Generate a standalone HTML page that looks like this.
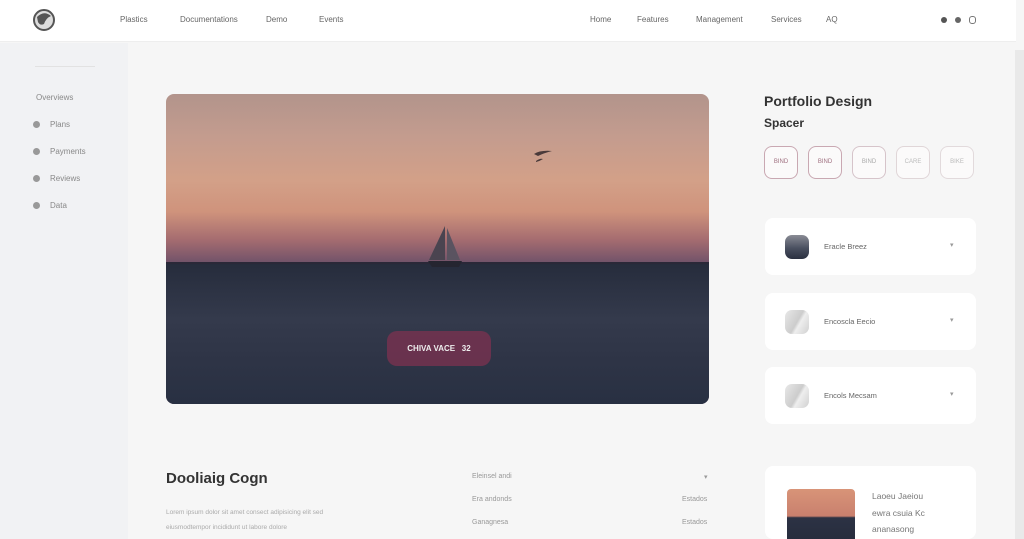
<!DOCTYPE html>
<html><head><meta charset="utf-8"><style>
*{margin:0;padding:0;box-sizing:border-box}
html,body{width:1024px;height:539px;overflow:hidden}
body{background:#f6f6f6;font-family:"Liberation Sans",sans-serif;position:relative;color:#555}
.a{position:absolute}
.hdr{left:0;top:0;width:1016px;height:42px;background:#fff;border-bottom:1px solid #eee}
.nav{font-size:8px;color:#666;top:15px}
.side{left:0;top:43px;width:128px;height:496px;background:#f1f2f4}
.si{font-size:8px;color:#888;left:50px}
.dot{width:7px;height:7px;border-radius:50%;background:#999;left:33px}
.hero{left:166px;top:94px;width:543px;height:310px;border-radius:8px;overflow:hidden;
background:linear-gradient(180deg,#b2948c 0%,#c49c8e 14%,#d3a088 28%,#cf937c 38%,#a56c70 47%,#74546a 54%)}
.sea{left:0;top:169px;width:100%;height:141px;background:linear-gradient(180deg,#262c3c 0%,#343a4c 40%,#2e3446 70%,#283042 100%)}
.chip{top:146px;width:34px;height:33px;border-radius:8px;border:1.5px solid #c9a8b2;font-size:6px;color:#a07080;text-align:center;line-height:30px;background:#fbfafa}
.card{left:765px;width:211px;background:#fff;border-radius:8px}
.ct{font-size:7.5px;color:#666;left:59px;top:24px}
.ic{left:20px;top:17px;width:24px;height:24px;border-radius:7px}
.gr{font-size:7px;color:#999}
</style></head><body>
<div class="a hdr"></div>
<svg class="a" style="left:32px;top:8px" width="24" height="24" viewBox="0 0 24 24"><circle cx="12" cy="12" r="10" fill="#ddd" stroke="#555" stroke-width="2"/><path d="M5 9 Q12 2 19 8 Q14 10 12 16 Q8 18 6 14Z" fill="#555"/></svg>
<div class="a nav" style="left:120px">Plastics</div>
<div class="a nav" style="left:180px">Documentations</div>
<div class="a nav" style="left:266px">Demo</div>
<div class="a nav" style="left:319px">Events</div>
<div class="a nav" style="left:590px">Home</div>
<div class="a nav" style="left:637px">Features</div>
<div class="a nav" style="left:696px">Management</div>
<div class="a nav" style="left:771px">Services</div>
<div class="a nav" style="left:826px">AQ</div>
<div class="a" style="left:941px;top:17px;width:6px;height:6px;border-radius:50%;background:#555"></div>
<div class="a" style="left:955px;top:17px;width:6px;height:6px;border-radius:50%;background:#666"></div>
<div class="a" style="left:969px;top:16px;width:7px;height:8px;border-radius:3px;border:1.5px solid #777"></div>
<div class="a" style="left:1015px;top:50px;width:9px;height:489px;background:#e9e9e9"></div>
<div class="a side"></div>
<div class="a" style="left:35px;top:66px;width:60px;height:1px;background:#e2e2e2"></div>
<div class="a si" style="left:36px;top:93px">Overviews</div>
<div class="a dot" style="top:121px"></div><div class="a si" style="top:120px">Plans</div>
<div class="a dot" style="top:148px"></div><div class="a si" style="top:147px">Payments</div>
<div class="a dot" style="top:175px"></div><div class="a si" style="top:174px">Reviews</div>
<div class="a dot" style="top:202px"></div><div class="a si" style="top:201px">Data</div>
<div class="a hero">
<div class="a sea"></div>
<div class="a" style="left:0;top:168px;width:100%;height:2px;background:#2a2838"></div>
<svg class="a" style="left:260px;top:130px" width="40" height="46" viewBox="0 0 40 46"><path d="M19 2 L19 36 L3 36Z" fill="#4a4450"/><path d="M21 4 L21 36 L34 36Z" fill="#5a5360"/><path d="M2 37 L36 37 L33 43 L6 43Z" fill="#252530"/></svg>
<svg class="a" style="left:366px;top:54px" width="24" height="16"><path d="M2 6 Q8 2 20 3 Q12 5 6 8Z M4 13 Q8 10 11 11 Q8 13 4 14Z" fill="#4a3a3a"/></svg>
<div class="a" style="left:221px;top:237px;width:104px;height:35px;border-radius:10px;background:rgba(125,50,80,.75);color:#eee;font-size:8px;font-weight:bold;text-align:center;line-height:35px">CHIVA VACE &nbsp; 32</div>
</div>
<div class="a" style="left:764px;top:93px;font-size:14px;font-weight:bold;color:#333">Portfolio Design</div>
<div class="a" style="left:764px;top:116px;font-size:12px;font-weight:bold;color:#333">Spacer</div>
<div class="a chip" style="left:764px">BIND</div>
<div class="a chip" style="left:808px">BIND</div>
<div class="a chip" style="left:852px;border-color:#d6c4ca;color:#aaa">BIND</div>
<div class="a chip" style="left:896px;border-color:#e0d6d8;color:#bbb">CARE</div>
<div class="a chip" style="left:940px;border-color:#e2dadc;color:#bbb">BIKE</div>
<div class="a card" style="top:218px;height:57px"><div class="a ic" style="background:linear-gradient(#8a8c95,#4a5060 55%,#2a3040)"></div><div class="a ct">Eracle Breez</div><div class="a gr" style="left:185px;top:23px">▾</div></div>
<div class="a card" style="top:293px;height:57px"><div class="a ic" style="background:linear-gradient(120deg,#e8e8e8,#ccc 50%,#eee 60%,#d0d0d0)"></div><div class="a ct">Encoscla Eecio</div><div class="a gr" style="left:185px;top:23px">▾</div></div>
<div class="a card" style="top:367px;height:57px"><div class="a ic" style="background:linear-gradient(120deg,#e8e8e8,#ccc 50%,#eee 60%,#d0d0d0)"></div><div class="a ct">Encols Mecsam</div><div class="a gr" style="left:185px;top:23px">▾</div></div>
<div class="a card" style="top:466px;height:73px;overflow:hidden">
<div class="a" style="left:22px;top:23px;width:68px;height:60px;border-radius:4px;background:linear-gradient(#d89478,#c9806e 45%,#2c3244 48%,#252a3a)"></div>
<div class="a" style="left:107px;top:22px;font-size:8.5px;color:#777;line-height:16.5px">Laoeu Jaeiou<br>ewra csuia Kc<br>ananasong</div></div>
<div class="a" style="left:166px;top:470px;font-size:15px;font-weight:bold;color:#333">Dooliaig Cogn</div>
<div class="a gr" style="left:166px;top:509px;font-size:6.5px;color:#aaa">Lorem ipsum dolor sit amet consect adipisicing elit sed</div>
<div class="a gr" style="left:166px;top:524px;font-size:6.5px;color:#aaa">eiusmodtempor incididunt ut labore dolore</div>
<div class="a gr" style="left:472px;top:473px">Eleinsel andi</div><div class="a gr" style="left:704px;top:473px">▾</div>
<div class="a gr" style="left:472px;top:496px">Era andonds</div><div class="a gr" style="left:682px;top:496px">Estados</div>
<div class="a gr" style="left:472px;top:519px">Ganagnesa</div><div class="a gr" style="left:682px;top:519px">Estados</div>
</body></html>
